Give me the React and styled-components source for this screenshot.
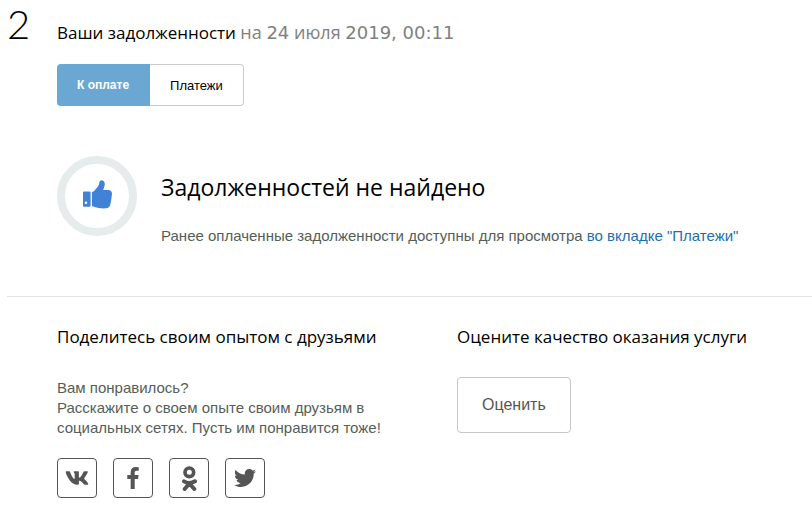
import styled, { createGlobalStyle } from "styled-components"
import { FaVk, FaTwitter } from "react-icons/fa"

const GlobalStyle = createGlobalStyle`
  * {
    box-sizing: border-box;
  }
  body {
    margin: 0;
    background-color: #fff;
    color: #555e5a;
    font-family: "Liberation Sans", Arial, sans-serif;
    font-size: 15px;
    line-height: 20px;
  }
  button {
    font-family: inherit;
    cursor: pointer;
  }
`

const Page = styled.main`
  padding-left: 7px;
`

const Step = styled.section`
  display: flex;
  padding-bottom: 50px;
  border-bottom: 1px solid #e4e6e6;
`

const StepNumber = styled.div`
  flex: 0 0 50px;
  padding-top: 4px;
  font-family: Lato, sans-serif;
  font-size: 40px;
  font-weight: 300;
  line-height: 40px;
  color: #000;
`

const StepBody = styled.div`
  flex: 1;
  padding-top: 20px;
`

const Title = styled.h2`
  margin: 0;
  font-family: "Open Sans", sans-serif;
  font-size: ${(props) => props.$size || "17px"};
  font-weight: 400;
  line-height: 26px;
  color: #000;
`

const Muted = styled.span`
  color: #808080;
  font-size: 18px;
  line-height: 20px;
`

const Digits = styled.span`
  font-family: "DejaVu Sans", sans-serif;
`

const Tabs = styled.div`
  display: flex;
  margin-top: 18px;
`

const Tab = styled.button`
  height: 42px;
  padding: 0 20px;
  border: 1px solid ${(props) => (props.$active ? "#6aa8d3" : "#c9cccc")};
  border-radius: ${(props) => (props.$active ? "4px 0 0 4px" : "0 4px 4px 0")};
  border-left-width: 0;
  background-color: ${(props) => (props.$active ? "#6aa8d3" : "#fff")};
  color: ${(props) => (props.$active ? "#fff" : "#000")};
  font-size: ${(props) => (props.$active ? "12px" : "13px")};
  font-weight: ${(props) => (props.$active ? "700" : "400")};
`

const Result = styled.div`
  display: flex;
  gap: 24px;
  margin-top: 50px;
`

const Circle = styled.div`
  display: flex;
  flex: 0 0 80px;
  align-items: center;
  justify-content: center;
  height: 80px;
  padding-bottom: 4px;
  border: 8px solid #e6ecec;
  border-radius: 50%;
  color: #3f82d6;
`

const ResultText = styled.div`
  padding-top: 18px;
`

const Text = styled.p`
  margin: ${(props) => props.$top} 0 0;
`

const Link = styled.a`
  color: #1d6fae;
  text-decoration: none;
`

const Columns = styled.div`
  display: grid;
  grid-template-columns: 400px 1fr;
  padding: 27px 0 13px 50px;
`

const Column = styled.section`
  padding-right: 40px;
`

const Socials = styled.div`
  display: flex;
  gap: 16px;
  margin-top: 20px;
`

const Social = styled.a`
  display: flex;
  align-items: center;
  justify-content: center;
  width: 40px;
  height: 40px;
  border: 1px solid #555;
  border-radius: 4px;
  color: #555;
`

const RateButton = styled.button`
  height: 56px;
  margin-top: 27px;
  padding: 0 24px;
  border: 1px solid #c4c8c8;
  border-radius: 4px;
  background-color: #fff;
  color: #555;
  font-size: 16px;
`

const ThumbIcon = () => (
  <svg width="29" height="29" viewBox="0 0 88 86" fill="currentColor" aria-hidden="true">
    <path
      fillRule="evenodd"
      d="M3 34h17q3 0 3 3v40q0 3-3 3H3q-3 0-3-3V37q0-3 3-3zM9 64a4 4 0 1 0 0 8a4 4 0 1 0 0-8z"
    />
    <path d="M27 36Q36 32 41 24Q47 17 49 10Q50 0 57 0Q67 2 66 14Q64 22 61 29H78Q88 31 88 41Q86 60 83 73Q80 84 70 85Q48 86 38 82Q32 79 27 79Z" />
  </svg>
)

const FacebookIcon = () => (
  <svg width="12" height="22" viewBox="95 0 864 1664" fill="currentColor" aria-hidden="true">
    <path d="M959 12v264h-157q-86 0-116 36t-30 108v189h293l-39 296h-254v759h-306v-759h-255v-296h255v-218q0-186 104-288.5t277-102.5q147 0 228 12z" />
  </svg>
)

const OkIcon = () => (
  <svg width="15" height="25" viewBox="0 0 45 75" fill="none" stroke="currentColor" aria-hidden="true">
    <circle cx="22" cy="19" r="13" strokeWidth="11" />
    <path d="M6 46q16 10 33 0M22 53L8 69M22 53L37 69" strokeWidth="12" strokeLinecap="round" />
  </svg>
)

const socials = [
  { name: "ВКонтакте", icon: <FaVk size={24} /> },
  { name: "Facebook", icon: <FacebookIcon /> },
  { name: "Одноклассники", icon: <OkIcon /> },
  { name: "Twitter", icon: <FaTwitter size={22} /> },
]

export default function App() {
  return (
    <>
      <GlobalStyle />
      <Page>
        <Step>
          <StepNumber>2</StepNumber>
          <StepBody>
            <Title>
              Ваши задолженности{" "}
              <Muted>
                на <Digits>24</Digits> июля <Digits>2019, 00:11</Digits>
              </Muted>
            </Title>
            <Tabs>
              <Tab type="button" $active>К оплате</Tab>
              <Tab type="button">Платежи</Tab>
            </Tabs>
            <Result>
              <Circle>
                <ThumbIcon />
              </Circle>
              <ResultText>
                <Title $size="23px">Задолженностей не найдено</Title>
                <Text $top="26px">
                  Ранее оплаченные задолженности доступны для просмотра{" "}
                  <Link href="#payments">во вкладке "Платежи"</Link>
                </Text>
              </ResultText>
            </Result>
          </StepBody>
        </Step>

        <Columns>
          <Column>
            <Title>Поделитесь своим опытом с друзьями</Title>
            <Text $top="28px">
              Вам понравилось?
              <br />
              Расскажите о своем опыте своим друзьям в социальных сетях. Пусть им понравится тоже!
            </Text>
            <Socials>
              {socials.map(({ name, icon }) => (
                <Social key={name} href="#share" aria-label={name}>
                  {icon}
                </Social>
              ))}
            </Socials>
          </Column>
          <Column>
            <Title>Оцените качество оказания услуги</Title>
            <RateButton type="button">Оценить</RateButton>
          </Column>
        </Columns>
      </Page>
    </>
  )
}
